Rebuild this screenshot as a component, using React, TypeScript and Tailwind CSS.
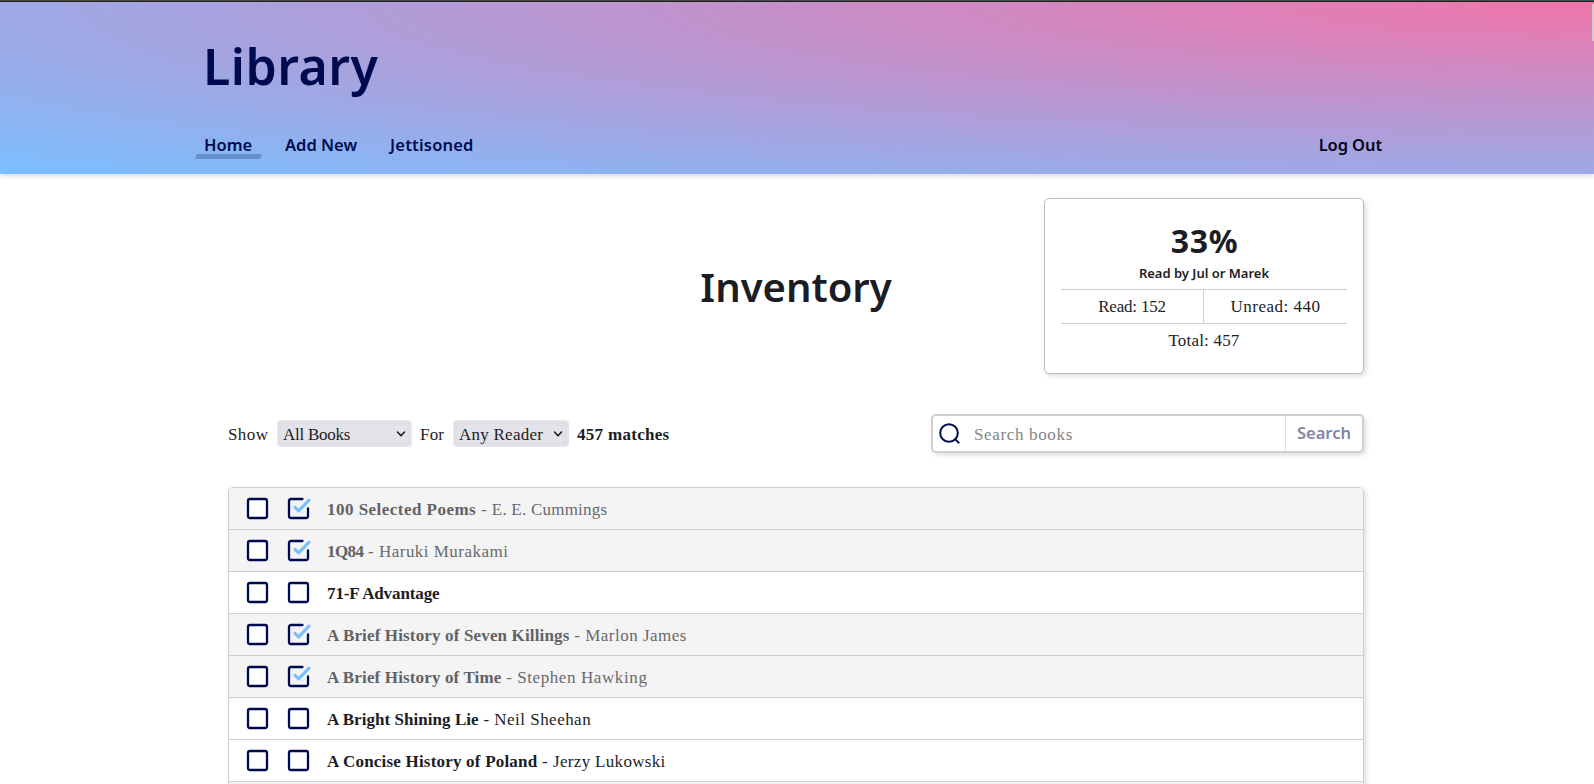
import type { ReactNode } from "react";

type Book = {
  title: string;
  titleClass: string;
  author?: string;
  authorClass?: string;
  read: boolean;
};

const books: Book[] = [
  { title: "100 Selected Poems", titleClass: "tracking-[0.47px]", author: "E. E. Cummings", authorClass: "tracking-[0.22px]", read: true },
  { title: "1Q84", titleClass: "tracking-[-0.6px]", author: "Haruki Murakami", authorClass: "tracking-[0.47px]", read: true },
  { title: "71-F Advantage", titleClass: "tracking-[-0.12px]", read: false },
  { title: "A Brief History of Seven Killings", titleClass: "tracking-[0.15px]", author: "Marlon James", authorClass: "tracking-[0.5px]", read: true },
  { title: "A Brief History of Time", titleClass: "tracking-[0.14px]", author: "Stephen Hawking", authorClass: "tracking-[0.6px]", read: true },
  { title: "A Bright Shining Lie", titleClass: "tracking-[0.05px]", author: "Neil Sheehan", authorClass: "tracking-[0.47px]", read: false },
  { title: "A Concise History of Poland", titleClass: "tracking-[0.2px]", author: "Jerzy Lukowski", authorClass: "tracking-[0.32px]", read: false },
];

function Checkbox({ checked }: { checked: boolean }) {
  return (
    <svg width="24" height="24" viewBox="0 0 24 24" fill="none" strokeLinecap="round" strokeLinejoin="round" className="block shrink-0">
      {checked ? (
        <>
          <path d="M15.5 2H4a2 2 0 0 0-2 2v15a2 2 0 0 0 2 2h15a2 2 0 0 0 2-2v-7.5" stroke="#000b4f" strokeWidth="2.3" />
          <path d="M8 10.3l3.7 3.5L22 3.2" stroke="#7abfff" strokeWidth="3.1" />
        </>
      ) : (
        <rect x="2" y="2" width="19" height="19" rx="2" fill="#fff" stroke="#000b4f" strokeWidth="2.3" />
      )}
    </svg>
  );
}

function Select({ children, className }: { children: ReactNode; className: string }) {
  return (
    <button
      className={`flex h-[27px] items-center justify-between rounded-[4px] border-2 border-[#e6e6ea] bg-[#e4e3e9] pr-[4px] pl-[4px] shadow-[inset_0_0_5px_rgba(0,0,0,0.06)] ${className}`}
    >
      <span className="pt-[3px]">{children}</span>
      <svg width="10" height="8" viewBox="0 0 10 8" fill="none" stroke="#1b1b22" strokeWidth="1.6" strokeLinecap="round" strokeLinejoin="round" className="mt-px">
        <path d="M1.5 2l3.5 3.7L8.5 2" />
      </svg>
    </button>
  );
}

export default function App() {
  return (
    <div className="h-[784px] w-full overflow-hidden bg-white font-['Liberation_Serif',serif] text-[17px] text-[#1c1d24]">
      <div className="h-[2px] border-b border-[#262626] bg-[#4a4a4a]" />
      <header className="relative flex h-[172px] flex-col bg-[radial-gradient(ellipse_at_top_right,#f075aa,#7abfff)] pt-[34px] font-['Noto_Sans',sans-serif] font-semibold text-[#000b4f] shadow-[0_1px_6px_rgba(0,0,0,0.2)]">
        <h1 className="pl-[203px] text-[50px] leading-[61px] tracking-[0.5px]">Library</h1>
        <nav className="mt-[36px] flex pr-[212px] pl-[204px] text-[16.5px] leading-6">
          <a className="relative w-[81px]">
            <span className="absolute top-[21px] -left-2 h-[5px] w-[65px] -skew-x-[20deg] bg-[#6690cc]" />
            <span className="relative">Home</span>
          </a>
          <a className="w-[105px]">Add New</a>
          <a className="tracking-[0.2px]">Jettisoned</a>
          <a className="ml-auto tracking-[-0.1px] text-[#05051a]">Log Out</a>
        </nav>
        <span className="absolute top-[2px] right-0 h-[37px] w-[2px] bg-[#cfcfcf]" />
      </header>

      <main className="ml-[228px] w-[1136px] pt-6">
        <section className="grid grid-cols-[320px_1fr_320px] items-center">
          <h2 className="col-start-2 pt-px text-center font-['Noto_Sans',sans-serif] text-[40px] leading-[48px] font-semibold">
            Inventory
          </h2>
          <div className="h-[176px] rounded-[5px] border border-[#b9bbbb] px-4 pt-[22px] text-center shadow-[2px_2px_5px_rgba(0,0,0,0.14)]">
            <div className="pl-px font-['Noto_Sans',sans-serif] text-[32px] leading-10 font-bold tracking-[0.7px]">33%</div>
            <div className="mt-[2px] font-['Noto_Sans',sans-serif] text-[13px] leading-5 font-semibold">Read by Jul or Marek</div>
            <div className="mt-[6px] grid grid-cols-2 border-y border-[#cfcfcf] leading-[33px]">
              <div className="border-r border-[#cfcfcf] tracking-[-0.2px]">Read: 152</div>
              <div className="tracking-[0.5px]">Unread: 440</div>
            </div>
            <div className="leading-[33px] tracking-[0.2px]">Total: 457</div>
          </div>
        </section>

        <section className="mt-10 flex h-[39px] items-center">
          <span className="w-[49px] pt-[3px] tracking-[0.4px]">Show</span>
          <Select className="w-[135px] tracking-[-0.25px]">All Books</Select>
          <span className="w-[41px] pt-[3px] pl-[8px] tracking-[0.2px]">For</span>
          <Select className="w-[116px] tracking-[0.25px]">Any Reader</Select>
          <strong className="pt-[3px] pl-2 tracking-[0.3px]">457 matches</strong>
          <div className="ml-auto flex h-[39px] w-[433px] items-center rounded-[5px] border-2 border-[#d0d0d0] bg-white shadow-[2px_2px_5px_rgba(0,0,0,0.14)]">
            <svg width="24" height="24" viewBox="0 0 24 24" fill="none" stroke="#000b4f" strokeWidth="2" className="mt-px ml-[5px] shrink-0">
              <circle cx="11" cy="11" r="8.8" />
              <path d="M16.9 16.9l4.3 4.3" />
            </svg>
            <span className="grow pt-[3px] pl-[12px] tracking-[0.65px] text-[#858585]">Search books</span>
            <span className="flex h-full w-[77px] items-center justify-center border-l border-[#dedee4] font-['Noto_Sans',sans-serif] text-[16.5px] font-semibold text-[#7f85a7]">
              Search
            </span>
          </div>
        </section>

        <ul className="mt-[34px] overflow-hidden rounded-t-[5px] border border-[#cfcfcf] shadow-[2px_2px_5px_rgba(0,0,0,0.14)]">
          {books.map((book) => (
            <li
              key={book.title}
              className={`flex h-[42px] items-center border-b border-[#cfcfcf] pl-[17px] ${book.read ? "bg-[#f4f4f4] text-[#68696d]" : "bg-white"}`}
            >
              <Checkbox checked={false} />
              <span className="w-[17px]" />
              <Checkbox checked={book.read} />
              <span className="pt-[3px] pl-4 whitespace-pre">
                <strong className={`${book.titleClass} ${book.read ? "text-[#616266]" : ""}`}>{book.title}</strong>
                {book.author && (
                  <>
                    <span className="tracking-[0.5px]"> - </span>
                    <span className={book.authorClass}>{book.author}</span>
                  </>
                )}
              </span>
            </li>
          ))}
          <li className="h-[42px] bg-[#f4f4f4]" />
        </ul>
      </main>
    </div>
  );
}
